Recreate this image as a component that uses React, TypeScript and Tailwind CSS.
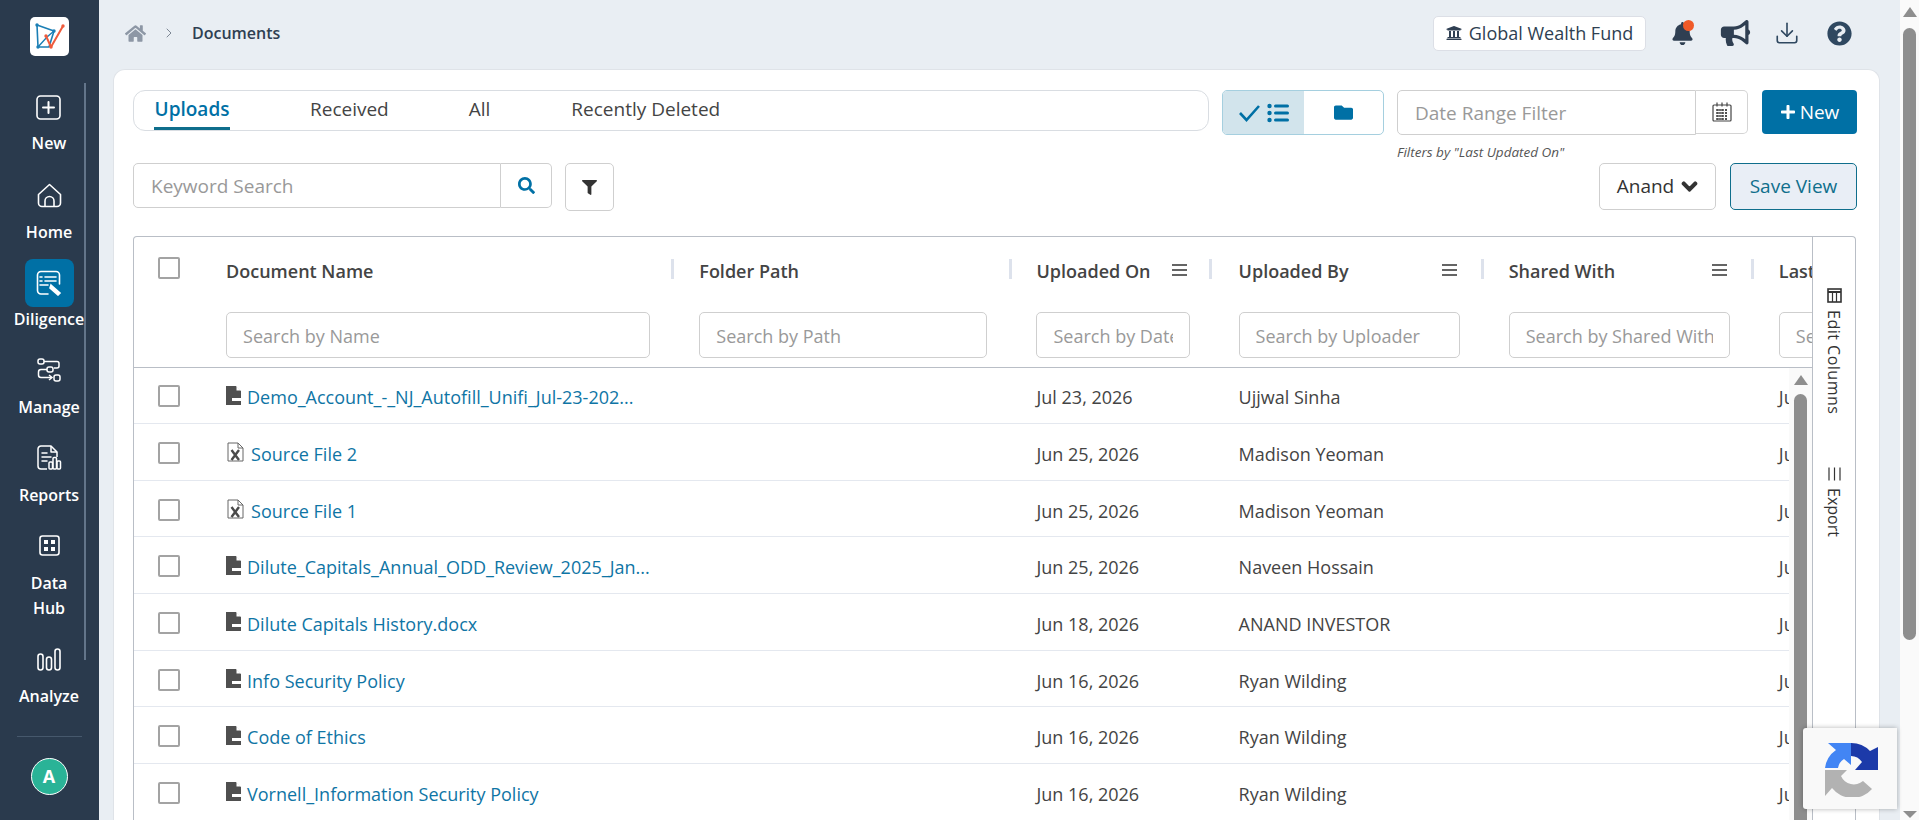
import React from "react";
import {
  FaHome,
  FaUniversity,
  FaBell,
  FaBullhorn,
  FaQuestionCircle,
  FaSearch,
  FaFilter,
  FaChevronDown,
  FaFolder,
  FaPlus,
} from "react-icons/fa";
import { ChevronRight, Download } from "lucide-react";

const rows = [
  { name: "Demo_Account_-_NJ_Autofill_Unifi_Jul-23-202...", type: "doc", date: "Jul 23, 2026", by: "Ujjwal Sinha" },
  { name: "Source File 2", type: "xls", date: "Jun 25, 2026", by: "Madison Yeoman" },
  { name: "Source File 1", type: "xls", date: "Jun 25, 2026", by: "Madison Yeoman" },
  { name: "Dilute_Capitals_Annual_ODD_Review_2025_Jan...", type: "doc", date: "Jun 25, 2026", by: "Naveen Hossain" },
  { name: "Dilute Capitals History.docx", type: "doc", date: "Jun 18, 2026", by: "ANAND INVESTOR" },
  { name: "Info Security Policy", type: "doc", date: "Jun 16, 2026", by: "Ryan Wilding" },
  { name: "Code of Ethics", type: "doc", date: "Jun 16, 2026", by: "Ryan Wilding" },
  { name: "Vornell_Information Security Policy", type: "doc", date: "Jun 16, 2026", by: "Ryan Wilding" },
];

const columns = [
  { title: "Document Name", placeholder: "Search by Name", width: "w-[473px]", input: "w-[424px]", menu: false },
  { title: "Folder Path", placeholder: "Search by Path", width: "w-[337px]", input: "w-[288px]", menu: false },
  { title: "Uploaded On", placeholder: "Search by Date", width: "w-[202px]", input: "w-[154px]", menu: true },
  { title: "Uploaded By", placeholder: "Search by Uploader", width: "w-[270px]", input: "w-[221px]", menu: true },
  { title: "Shared With", placeholder: "Search by Shared With", width: "w-[270px]", input: "w-[221px]", menu: true },
  { title: "Last Updated On", placeholder: "Search by Date", width: "w-[200px]", input: "w-[154px]", menu: false },
];

const Logo = () => (
  <div className="w-[39px] h-[39px] bg-white rounded-[5px] flex items-center justify-center">
    <svg width="33" height="33" viewBox="0 0 33 33" fill="none">
      <path d="M4 5 L21 11 L16 27 L5 27 Z" stroke="#1b7fb5" strokeWidth="1.6" strokeLinejoin="round" />
      <path d="M5 27 L14 17 L21 11" stroke="#1b7fb5" strokeWidth="1.4" />
      <path d="M13 16 L18 27 L30 6" stroke="#ef5b3c" strokeWidth="2" strokeLinejoin="round" />
      <circle cx="4" cy="5" r="1.7" fill="#1b7fb5" />
      <circle cx="21" cy="11" r="1.7" fill="#1b7fb5" />
      <circle cx="5" cy="27" r="1.7" fill="#1b7fb5" />
      <circle cx="13" cy="16" r="1.7" fill="#ef5b3c" />
      <circle cx="18" cy="27" r="1.7" fill="#ef5b3c" />
      <circle cx="30" cy="6" r="1.7" fill="#ef5b3c" />
    </svg>
  </div>
);

const NewIcon = () => (
  <svg width="25" height="25" viewBox="0 0 25 25" fill="none" stroke="white" strokeWidth="1.6" strokeLinecap="round">
    <rect x="1" y="1" width="23" height="23" rx="3.5" />
    <path d="M12.5 7v11M7 12.5h11" strokeWidth="2" />
  </svg>
);

const HomeIcon = () => (
  <svg width="25" height="25" viewBox="0 0 25 25" fill="none" stroke="white" strokeWidth="1.6" strokeLinejoin="round">
    <path d="M1.5 11.5 L12.5 1.5 L23.5 11.5 V20 a3.5 3.5 0 0 1 -3.5 3.5 H5 a3.5 3.5 0 0 1 -3.5 -3.5 Z" />
    <path d="M8 23.5 V18 a4.5 4.5 0 0 1 9 0 V23.5" />
  </svg>
);

const DiligenceIcon = () => (
  <svg width="26" height="26" viewBox="0 0 26 26" fill="none" stroke="white" strokeWidth="1.6" strokeLinecap="round">
    <path d="M12 24 H5 a3.5 3.5 0 0 1 -3.5 -3.5 V5 A3.5 3.5 0 0 1 5 1.5 h15 a3.5 3.5 0 0 1 3.5 3.5 V14" />
    <path d="M4 7h2M9 7h11M4 11h2M9 11h11M4 15h8" />
    <path d="M15 15 L24 23 L22 25 L14 18 Z" fill="white" />
  </svg>
);

const ManageIcon = () => (
  <svg width="24" height="24" viewBox="0 0 24 24" fill="none" stroke="white" strokeWidth="1.5">
    <rect x="1" y="1" width="6" height="5" rx="2" />
    <path d="M7 3.5 H20 a2 2 0 0 1 2 2 V8 a2 2 0 0 1 -2 2 H17" />
    <rect x="10" y="9" width="6" height="5" rx="2" />
    <path d="M10 11.5 H4 a2.5 2.5 0 0 0 -2.5 2.5 V17 a2.5 2.5 0 0 0 2.5 2.5 H14" />
    <path d="M12 17 L15 19.5 L12 22" />
    <rect x="17" y="17" width="6" height="6" rx="2" />
  </svg>
);

const ReportsIcon = () => (
  <svg width="25" height="26" viewBox="0 0 25 26" fill="none" stroke="white" strokeWidth="1.5" strokeLinejoin="round">
    <path d="M10 24 H4 a3 3 0 0 1 -3 -3 V4 a3 3 0 0 1 3 -3 H14 L20 7 V12" />
    <path d="M14 1 V7 H20" />
    <path d="M5 8h5M5 12h9M5 16h5" strokeLinecap="round" />
    <rect x="12" y="17" width="3.5" height="7" rx="1" />
    <rect x="16" y="12.5" width="3.5" height="11.5" rx="1" />
    <rect x="20" y="16" width="3.5" height="8" rx="1" />
  </svg>
);

const DataHubIcon = () => (
  <svg width="21" height="21" viewBox="0 0 21 21" fill="none">
    <rect x="1" y="1" width="19" height="19" rx="2.5" stroke="white" strokeWidth="1.6" />
    <rect x="5" y="5" width="4" height="4" fill="white" />
    <rect x="12" y="5" width="4" height="4" fill="white" />
    <rect x="5" y="12" width="4" height="4" fill="white" />
    <rect x="12" y="12" width="4" height="4" fill="white" />
  </svg>
);

const AnalyzeIcon = () => (
  <svg width="24" height="23" viewBox="0 0 24 23" fill="none" stroke="white" strokeWidth="1.6">
    <rect x="1" y="6" width="5" height="16" rx="2.5" />
    <rect x="9.5" y="9" width="5" height="13" rx="2.5" />
    <rect x="18" y="1" width="5" height="21" rx="2.5" />
  </svg>
);

const DocIcon = () => (
  <svg width="15" height="19" viewBox="0 0 15 19" className="shrink-0">
    <path d="M0 0 H10 L15 5 V19 H0 Z" fill="#4f4f4f" />
    <rect x="6" y="12" width="9" height="3" fill="white" />
    <path d="M10.5 0 L15 4.5 H10.5 Z" fill="white" />
  </svg>
);

const XlsIcon = () => (
  <svg width="17" height="20" viewBox="0 0 17 20" fill="none" className="shrink-0">
    <path d="M1 1 H11 L16 6 V19 H1 Z" stroke="#666" strokeWidth="1" strokeLinejoin="round" />
    <path d="M11 1 V6 H16" stroke="#666" strokeWidth="1" />
    <path d="M4.5 8 L12 18 M12 8 L4.5 18" stroke="#4a4a4a" strokeWidth="2.4" />
  </svg>
);

const MenuLines = () => (
  <svg width="15" height="12" viewBox="0 0 15 12" stroke="#333" strokeWidth="1.4" className="block">
    <path d="M0 1h15M0 6h15M0 11h15" />
  </svg>
);

const Checkbox = () => (
  <span className="block w-[22px] h-[22px] border-[2.5px] border-[#a3a3a3] rounded-[2px] bg-white" />
);

const NavItem = ({ icon, label, className }: { icon: React.ReactNode; label: React.ReactNode; className: string }) => (
  <div className={`flex flex-col items-center text-white text-[16px] leading-[25px] font-semibold text-center ${className}`}>
    {icon}
    {label}
  </div>
);

const App: React.FC = () => {
  return (
    <div className="h-screen flex overflow-hidden bg-[#e9eef3] font-['Open_Sans',sans-serif] text-[#333]">
      <aside className="relative w-[99px] shrink-0 bg-[#2a3a4d] flex flex-col items-center pr-[1px]">
        <div className="mt-[17px] mb-[39px]">
          <Logo />
        </div>
        <NavItem icon={<NewIcon />} label={<span className="mt-[11px]">New</span>} className="h-[88px]" />
        <NavItem icon={<HomeIcon />} label={<span className="mt-[12px]">Home</span>} className="h-[76px]" />
        <NavItem
          icon={
            <span className="w-[49px] h-[48px] rounded-[8px] bg-[#0070a5] flex items-center justify-center">
              <DiligenceIcon />
            </span>
          }
          label={<span className="mt-[0px]">Diligence</span>}
          className="h-[99px]"
        />
        <NavItem icon={<ManageIcon />} label={<span className="mt-[13px]">Manage</span>} className="h-[87px]" />
        <NavItem icon={<ReportsIcon />} label={<span className="mt-[12px]">Reports</span>} className="h-[90px]" />
        <NavItem
          icon={<DataHubIcon />}
          label={
            <span className="mt-[15px]">
              Data
              <br />
              Hub
            </span>
          }
          className="h-[113px]"
        />
        <NavItem icon={<AnalyzeIcon />} label={<span className="mt-[13px]">Analyze</span>} className="h-[88px]" />
        <div className="w-[65px] border-t border-[#46586c] mb-[21px]" />
        <div className="w-[37px] h-[37px] rounded-full bg-[#2ab397] border border-white text-white font-bold text-[18px] flex items-center justify-center">
          A
        </div>
        <div className="absolute left-[84px] top-[83px] w-[2px] h-[577px] bg-[#63758a]" />
      </aside>

      <main className="flex-1 min-w-0 flex flex-col">
        <header className="h-[69px] shrink-0 flex items-center pl-[26px] pr-[48px] pb-[3px]">
          <FaHome className="w-[21px] h-[19px] text-[#8d97a5]" />
          <ChevronRight className="w-[16px] h-[16px] ml-[15px] mr-[15px] text-[#7d8794]" strokeWidth={1.5} />
          <span className="text-[16px] font-semibold text-[#2f3f52]">Documents</span>
          <div className="ml-auto h-[35px] w-[213px] bg-white border border-[#dcdfe6] rounded-[5px] flex items-center justify-center gap-[7px] text-[18px] text-[#2f3f52]">
            <FaUniversity className="w-[16px] h-[16px] text-[#2f3f52]" />
            Global Wealth Fund
          </div>
          <div className="relative ml-[26px] w-[23px]">
            <FaBell className="w-[21px] h-[23px] text-[#2f3f52]" />
            <span className="absolute -top-[2px] left-[11px] w-[11px] h-[11px] rounded-full bg-[#f05a28]" />
          </div>
          <FaBullhorn className="ml-[24px] w-[33px] h-[26px] text-[#2f3f52]" />
          <Download className="ml-[22px] w-[26px] h-[26px] text-[#2f4860]" strokeWidth={1.5} />
          <FaQuestionCircle className="ml-[27px] w-[25px] h-[25px] text-[#2f4860]" />
        </header>

        <section className="flex-1 min-h-0 ml-[14px] mr-[20px] bg-white border border-[#dfe3e8] border-b-0 rounded-t-[12px] pl-[19px] pr-[22px] pt-[20px] flex flex-col">
          <div className="flex items-start">
            <nav className="w-[1076px] h-[41px] border border-[#d9dde2] rounded-[12px] flex text-[19px] pl-[20px]">
              <span className="h-[39px] w-[76px] border-b-[3px] border-[#0f6e8c] text-[#0070a5] font-semibold text-center leading-[37px]">
                Uploads
              </span>
              <span className="ml-[80px] leading-[37px] text-[#444]">Received</span>
              <span className="ml-[80px] leading-[37px] text-[#444]">All</span>
              <span className="ml-[81px] leading-[37px] text-[#444]">Recently Deleted</span>
            </nav>
            <div className="ml-[13px] w-[162px] h-[45px] border border-[#a5cfdf] rounded-[5px] flex overflow-hidden">
              <span className="w-[81px] bg-[#d2e4ec] flex items-center justify-center gap-[6px]">
                <svg width="22" height="18" viewBox="0 0 22 18" fill="none" stroke="#0070a5" strokeWidth="2.6">
                  <path d="M1 9 L7.5 16 L20 2" />
                </svg>
                <svg width="22" height="20" viewBox="0 0 22 20" fill="#0070a5">
                  <circle cx="2.5" cy="3" r="2.2" />
                  <circle cx="2.5" cy="10" r="2.2" />
                  <circle cx="2.5" cy="17" r="2.2" />
                  <rect x="7" y="1.5" width="15" height="3" rx="1.5" />
                  <rect x="7" y="8.5" width="15" height="3" rx="1.5" />
                  <rect x="7" y="15.5" width="15" height="3" rx="1.5" />
                </svg>
              </span>
              <span className="flex-1 flex items-center justify-center">
                <FaFolder className="w-[21px] h-[19px] text-[#0070a5]" />
              </span>
            </div>
            <div className="ml-[13px] w-[351px]">
              <div className="flex h-[45px]">
                <input
                  placeholder="Date Range Filter"
                  className="w-[299px] h-[45px] border border-[#cfcfcf] rounded-l-[5px] px-[17px] text-[19px] placeholder:text-[#999] outline-none"
                />
                <span className="flex-1 h-[44px] border border-l-0 border-[#d4d4d4] rounded-r-[5px] flex items-center justify-center">
                  <svg width="20" height="20" viewBox="0 0 20 20" fill="none" stroke="#444" strokeWidth="1.2">
                    <rect x="1" y="3" width="18" height="16" rx="1" />
                    <path d="M5 0.5v4M10 0.5v4M15 0.5v4" />
                    <path d="M4 8h12M4 11h12M4 14h12M4 17h12M6 7v11M10 7v11M14 7v11" strokeWidth="1.4" strokeDasharray="2 1" />
                  </svg>
                </span>
              </div>
              <p className="mt-[9px] text-[13.5px] leading-[16px] italic text-[#555]">Filters by "Last Updated On"</p>
            </div>
            <button className="ml-[14px] w-[95px] h-[44px] bg-[#0070a5] rounded-[4px] text-white text-[19px] flex items-center justify-center gap-[4px]">
              <FaPlus className="w-[16px] h-[16px]" />
              New
            </button>
          </div>

          <div className="flex items-start mt-[3px]">
            <div className="flex">
              <input
                placeholder="Keyword Search"
                className="w-[368px] h-[45px] border border-[#cfcfcf] rounded-l-[5px] px-[17px] text-[19px] placeholder:text-[#999] outline-none"
              />
              <span className="w-[51px] h-[45px] border border-l-0 border-[#cfcfcf] rounded-r-[5px] flex items-center justify-center">
                <FaSearch className="w-[17px] h-[17px] text-[#0070a5]" />
              </span>
              <span className="ml-[13px] w-[49px] h-[48px] border border-[#cfcfcf] rounded-[5px] flex items-center justify-center">
                <FaFilter className="w-[15px] h-[15px] text-[#333]" />
              </span>
            </div>
            <div className="ml-auto flex gap-[14px]">
              <div className="w-[117px] h-[47px] border border-[#cfcfcf] rounded-[5px] text-[19px] flex items-center justify-center gap-[7px]">
                Anand
                <FaChevronDown className="w-[17px] h-[17px] text-[#333] stroke-current stroke-[40]" />
              </div>
              <div className="w-[127px] h-[47px] border border-[#0f6e8c] rounded-[5px] bg-[#e9eef6] text-[#0f6e8c] text-[19px] flex items-center justify-center">
                Save View
              </div>
            </div>
          </div>

          <div className="mt-[25px] mr-[1px] flex-1 min-h-0 flex border border-[#b9bec6] border-b-0 rounded-t-[4px] overflow-hidden">
            <div className="relative flex-1 min-w-0 overflow-hidden">
              <table className="table-fixed w-[1845px] border-collapse">
                <thead>
                  <tr className="h-[130px] border-b border-[#b9bec6]">
                    <th className="w-[92px] p-0 align-top">
                      <div className="pl-[24px] pt-[20px]">
                        <Checkbox />
                      </div>
                    </th>
                    {columns.map((col, i) => (
                      <th key={col.title} className={`${col.width} p-0 align-top font-normal text-left`}>
                        <div className="relative h-[20px] mt-[22px] pt-[4px] flex items-center text-[18px] leading-[20px] font-semibold text-[#444] whitespace-nowrap">
                          {col.title}
                          {col.menu && (
                            <span className="absolute right-[52px] top-[5px]">
                              <MenuLines />
                            </span>
                          )}
                          {i < 5 && (
                            <span className={`absolute top-0 w-[3px] h-[20px] bg-[#dde2ec] ${i === 0 ? "left-[445px]" : i === 1 ? "left-[310px]" : i === 2 ? "left-[173px]" : "left-[242px]"}`} />
                          )}
                        </div>
                        <input
                          placeholder={col.placeholder}
                          className={`${col.input} mt-[33px] block h-[46px] border border-[#cfcfcf] rounded-[5px] px-[16px] pt-[2px] text-[18px] placeholder:text-[#999] outline-none`}
                        />
                      </th>
                    ))}
                  </tr>
                </thead>
                <tbody>
                  {rows.map((row, i) => (
                    <tr key={i} className="h-[56.67px] border-b border-[#e4e8ef] text-[18px] text-[#444]">
                      <td className="p-0 pl-[24px] pt-[2px]">
                        <Checkbox />
                      </td>
                      <td className="p-0">
                        <div className={`flex items-center ${row.type === "doc" ? "gap-[6px]" : "gap-[7px] pl-[1px]"}`}>
                          {row.type === "doc" ? <DocIcon /> : <XlsIcon />}
                          <span className="pt-[5px] text-[#0f75a5] whitespace-nowrap">{row.name}</span>
                        </div>
                      </td>
                      <td className="p-0" />
                      <td className="p-0 pt-[5px]">{row.date}</td>
                      <td className="p-0 pt-[5px]">{row.by}</td>
                      <td className="p-0" />
                      <td className="p-0 pt-[5px]">{row.date}</td>
                    </tr>
                  ))}
                </tbody>
              </table>
              <div className="absolute top-[131px] right-0 bottom-0 w-[23px] bg-[#fafafa] flex flex-col items-center">
                <span className="mt-[7px] w-0 h-0 border-x-[7px] border-x-transparent border-b-[10px] border-b-[#8e8e8e]" />
                <span className="mt-[9px] w-[13px] flex-1 rounded-t-[7px] bg-[#8e8e8e]" />
              </div>
            </div>
            <div className="w-[43px] shrink-0 border-l border-[#b9bec6] flex flex-col items-center pt-[51px] text-[16px] text-[#333]">
              <svg width="15" height="15" viewBox="0 0 15 15" fill="none" stroke="#333">
                <rect x="1" y="1" width="13" height="13" strokeWidth="1.6" />
                <path d="M1 4h13" strokeWidth="2" />
                <path d="M5.5 4v10M9.5 4v10" strokeWidth="1.2" />
              </svg>
              <span className="mt-[7px] [writing-mode:vertical-rl] leading-[20px] tracking-[0.5px]">Edit Columns</span>
              <svg width="15" height="14" viewBox="0 0 15 14" stroke="#333" strokeWidth="1.2" className="mt-[53px] rotate-90">
                <path d="M1 1.5h13M1 7h13M1 12.5h13" />
              </svg>
              <span className="mt-[7px] [writing-mode:vertical-rl] leading-[20px]">Export</span>
            </div>
          </div>
        </section>
      </main>

      <div className="w-[19px] shrink-0 bg-[#fafafa] flex flex-col items-center">
        <span className="mt-[7px] w-0 h-0 border-x-[7px] border-x-transparent border-b-[10px] border-b-[#8e8e8e]" />
        <span className="mt-[11px] w-[13px] h-[612px] rounded-[7px] bg-[#8e8e8e]" />
        <span className="mt-auto mb-[2px] w-0 h-0 border-x-[7px] border-x-transparent border-t-[7px] border-t-[#8e8e8e]" />
      </div>

      <div className="fixed left-[1803px] top-[728px] w-[94px] h-[81px] bg-[#f9f9f9] rounded-l-[3px] shadow-[0_0_5px_rgba(0,0,0,0.3)] flex items-center pl-[20px]">
        <svg width="56" height="56" viewBox="0 0 56 56">
          <path d="M2 27 A26 26 0 0 1 13 9 L5 2 H28 V24 L21 18 A13 13 0 0 0 15 27 Z" fill="#4285f4" />
          <path d="M28 2 A26 26 0 0 1 47 10 L55 6 V29 H32 L39 21 A14 14 0 0 0 28 15 Z" fill="#1c3aa9" />
          <path d="M2 29 H24 L18 35 A14 14 0 0 0 40 40 L49 48 A26 26 0 0 1 9 47 L2 55 Z" fill="#b2b2b2" />
        </svg>
      </div>
    </div>
  );
};

export default App;
